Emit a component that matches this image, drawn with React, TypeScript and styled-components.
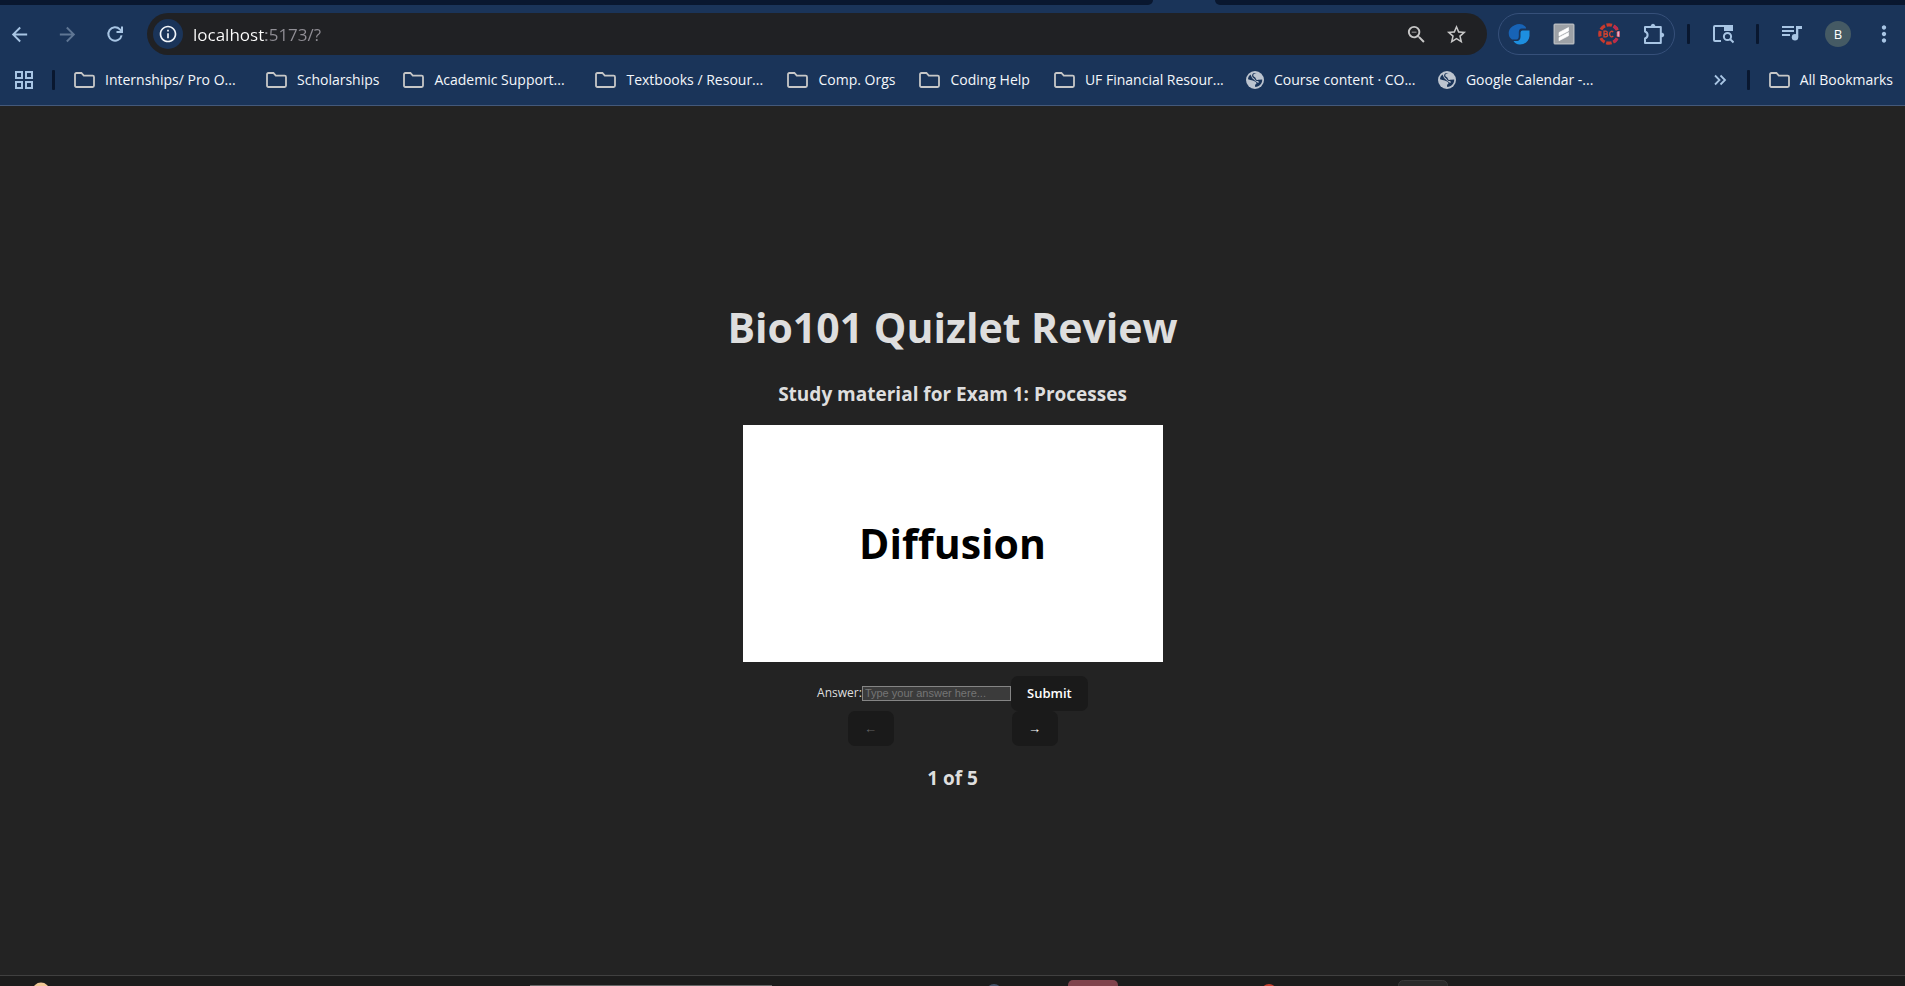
import React, { useState } from "react";
import styled, { createGlobalStyle } from "styled-components";
import {
  MdArrowBack,
  MdArrowForward,
  MdInfoOutline,
  MdMoreVert,
  MdOutlineZoomOut,
  MdStarBorder,
} from "react-icons/md";

const GlobalStyle = createGlobalStyle`
  *, *::before, *::after { box-sizing: border-box; }
  body {
    margin: 0;
    background: #232323;
    font-family: "Open Sans", "Noto Sans", sans-serif;
  }
  button, input { font-family: inherit; }
`;

const Screen = styled.div`
  display: flex;
  flex-direction: column;
  height: 100vh;
  overflow: hidden;
`;

/* ---------- browser chrome ---------- */

const Browser = styled.header`
  background: #1a3459;
  border-bottom: 1px solid #44597a;
`;

const TabStrip = styled.div`
  display: flex;
  gap: 62px;
  height: 5px;
`;

const TabEdge = styled.div<{ $side: "left" | "right" }>`
  flex: ${(p) => (p.$side === "left" ? "1153 1 0" : "690 1 0")};
  background: #09172f;
  border-radius: ${(p) => (p.$side === "left" ? "0 0 8px 0" : "0 0 0 8px")};
`;

const Toolbar = styled.div`
  display: flex;
  align-items: center;
  padding: 8px 10px 0 8px;
`;

const NavGroup = styled.nav`
  display: flex;
  gap: 26px;
  margin-right: 21px;
`;

const IconButton = styled.button<{ $color?: string }>`
  display: flex;
  align-items: center;
  justify-content: center;
  flex: none;
  width: 22px;
  height: 22px;
  padding: 0;
  border: 0;
  background: none;
  color: ${(p) => p.$color || "#a8c5e4"};
  cursor: pointer;
  svg { flex: none; }
`;

const AddressBar = styled.div`
  display: flex;
  align-items: center;
  flex: 1;
  min-width: 0;
  height: 42px;
  margin-right: 11px;
  padding: 0 20px 0 6px;
  gap: 18px;
  border-radius: 21px;
  background: #202124;
`;

const SiteInfo = styled.button`
  display: flex;
  align-items: center;
  justify-content: center;
  flex: none;
  width: 30px;
  height: 30px;
  margin-right: -8px;
  padding: 0;
  border: 0;
  border-radius: 50%;
  background: #1a3459;
  color: #f1f5fa;
`;

const UrlInput = styled.input`
  flex: 1;
  min-width: 0;
  height: 30px;
  padding: 0;
  border: 0;
  outline: 0;
  font-size: 17px;
  line-height: 24px;
  color: transparent;
  background: linear-gradient(90deg, #ffffff 73px, #918f96 73px);
  -webkit-background-clip: text;
  background-clip: text;
`;

const Extensions = styled.div`
  display: flex;
  align-items: center;
  gap: 23px;
  height: 42px;
  padding: 0 9px;
  border: 1px solid #36507a;
  border-radius: 21px;
`;

const Divider = styled.span`
  flex: none;
  width: 3px;
  height: 20px;
  border-radius: 1px;
  background: #09172f;
`;

const ToolActions = styled.div`
  display: flex;
  align-items: center;
  gap: 22px;
  margin-left: 12px;
`;

const Avatar = styled.button`
  flex: none;
  width: 26px;
  height: 26px;
  padding: 0;
  border: 0;
  border-radius: 50%;
  background: #455a64;
  color: #ffffff;
  font-size: 13px;
  line-height: 26px;
`;

const Bookmarks = styled.nav`
  display: flex;
  align-items: center;
  height: 50px;
  padding: 0 12px 0 13px;
`;

const AppsGroup = styled.div`
  display: flex;
  align-items: center;
  gap: 17px;
`;

const BookmarkList = styled.div`
  display: flex;
  flex: 1;
  min-width: 0;
  overflow: hidden;
  margin-left: 19px;
`;

const Bookmark = styled.a<{ $long?: boolean }>`
  display: flex;
  align-items: center;
  flex: none;
  gap: 10px;
  width: ${(p) => (p.$long ? "192px" : "auto")};
  padding-right: 24px;
  color: #f4f7fb;
  font-size: 14px;
  line-height: 20px;
  text-decoration: none;
  white-space: nowrap;
  svg { flex: none; color: #c7c7c7; }
`;

const AllBookmarks = styled.div`
  display: flex;
  align-items: center;
  gap: 19px;
  margin-left: 16px;
  a { padding-right: 0; }
`;

/* ---------- quiz page ---------- */

const Main = styled.main`
  display: flex;
  flex: 1;
  flex-direction: column;
  align-items: center;
  justify-content: center;
  min-height: 0;
  padding-top: 9px;
  color: #dedede;
  text-align: center;
`;

const Title = styled.h1`
  margin: 0 0 27px;
  font-size: 41px;
  line-height: 54px;
`;

const Caption = styled.h2`
  margin: 0;
  font-size: 19px;
  line-height: 26px;
`;

const Card = styled.section`
  display: flex;
  align-items: center;
  justify-content: center;
  width: 420px;
  height: 237px;
  margin: 18px 0 14px;
  background: #ffffff;
  color: #000000;
`;

const Term = styled.p`
  margin: 0;
  font-size: 41px;
  font-weight: 700;
  line-height: 54px;
`;

const AnswerForm = styled.form`
  display: flex;
  align-items: center;
`;

const AnswerLabel = styled.label`
  font-size: 12px;
  line-height: 18px;
`;

const AnswerInput = styled.input`
  width: 149px;
  height: 15px;
  padding: 0 2px;
  border: 1px solid #858585;
  background: #3b3b3b;
  color: #ffffff;
  font-family: "Liberation Sans", Arial, sans-serif;
  font-size: 11px;
  line-height: 13px;
  &::placeholder { color: #757575; }
`;

const Button = styled.button<{ $wide?: boolean }>`
  width: ${(p) => (p.$wide ? "77px" : "46px")};
  height: 35px;
  padding: 0;
  border: 0;
  border-radius: 7px;
  background: #1a1a1a;
  color: #ffffff;
  font-size: 13px;
  font-weight: 600;
  cursor: pointer;
  &:disabled { color: #626262; cursor: default; }
`;

const Pager = styled.div`
  display: flex;
  gap: 118px;
  margin-bottom: 19px;
`;

/* ---------- system taskbar ---------- */

const Taskbar = styled.footer`
  flex: none;
  height: 11px;
  border-top: 1px solid #404040;
  background: #1c1c1c;
  svg { display: block; width: 100%; height: 10px; }
`;

/* ---------- icons ---------- */

const ReloadIcon = () => (
  <svg width="18" height="18" viewBox="0 0 18 18" fill="none" stroke="currentColor" strokeWidth="2">
    <path d="M15.6 10.4A6.7 6.7 0 1 1 13.9 4.4L16 6.6" />
    <path d="M16 1.5V7H10.5" />
  </svg>
);

const FolderIcon = () => (
  <svg width="21" height="16" viewBox="0 0 21 16" fill="none" stroke="currentColor" strokeWidth="1.8">
    <path d="M1 2.4Q1 1 2.4 1H7.4L9.8 3.6H18.6Q20 3.6 20 5V13.6Q20 15 18.6 15H2.4Q1 15 1 13.6Z" />
  </svg>
);

const GlobeIcon = () => (
  <svg width="18" height="18" viewBox="0 0 18 18">
    <circle cx="9" cy="9" r="9" fill="#bcc4cf" />
    <path
      d="M11 2.3C8.500 2 7 3.200 7.300 4.800C7.600 6.200 9.500 5.800 9.700 7.200C9.900 8.800 11 9.200 12.600 8.800L16.200 8.500C16.400 12.200 13.700 15.800 9.200 16.100L9 13.800C10.500 13.200 11 12 9.800 11C8.500 10 5.500 9 2 8.200C2 6.500 3 4.500 4.500 3.500L6 6.800C7 8.300 8 8.600 9 9.800L12.200 12C13.500 10.500 12.500 9.900 10.800 9.900C8.900 9.500 8.800 7.500 7.600 6.900C5.400 5.800 5.600 2.400 8.500 1.900Z"
      fill="#1a3459"
    />
  </svg>
);

const AppsIcon = () => (
  <svg width="20" height="20" viewBox="0 0 20 20" fill="none" stroke="currentColor" strokeWidth="2">
    <path d="M2 2h6v6h-6zM12 2h6v6h-6zM2 12h6v6h-6zM12 12h6v6h-6z" />
  </svg>
);

const SwirlIcon = () => (
  <svg width="22" height="22" viewBox="0 0 22 22">
    <path d="M6.5 2.2Q12.500 -.8 17 3.200Q18.300 4.300 18 5.600H13.500Q11 6 10.800 9V13Q10.800 16.400 8.500 16.400H4Q.2 14 .8 8.800Q1.500 4.300 6.500 2.200Z" fill="#1763b6" />
    <path d="M14.500 7.600H21.500V13C21 18.500 16.500 21.700 11.500 21.500Q7.500 21.200 5.500 17.900H9.500Q12.500 17.500 12.500 13.500V9.600Q12.700 7.600 14.500 7.600Z" fill="#1d8fe0" />
  </svg>
);

const StripeIcon = () => (
  <svg width="22" height="22" viewBox="0 0 22 22">
    <rect x="0.500" y="0.500" width="21" height="21" rx="1.500" fill="#b3b7bc" />
    <rect x="2" y="2" width="18" height="18" fill="#9da1a6" />
    <path d="M6 9.500L15.500 4.500V8L6 13ZM6 14.500L15.500 9.500V12.800L6 17.800Z" fill="#fff" stroke="#fff" strokeWidth=".6" strokeLinejoin="round" />
  </svg>
);

const BadgeIcon = () => (
  <svg width="22" height="22" viewBox="0 0 22 22">
    <circle cx="11" cy="11" r="9.200" fill="none" stroke="#c93a2d" strokeWidth="3.200" strokeDasharray="5.600 1.626" strokeDashoffset="2.800" />
    <path d="M16.200 3.400l2.600 2.600M16.200 18.600l2.600-2.600" stroke="#b82958" strokeWidth="3" />
    <path d="M6 8.200V13.800H8Q9.600 13.700 9.600 12.300Q9.600 11.100 8.300 11Q9.300 10.700 9.300 9.600Q9.200 8.200 7.800 8.200ZM6 11H8.300M15.200 9Q14.300 8.100 13.200 8.300Q11.600 8.800 11.600 11T13.200 13.800Q14.400 14 15.200 13" fill="none" stroke="#d4442f" strokeWidth="1.300" />
    <path d="M19 8.500h3v5h-3z" fill="#b82958" />
    <path d="M21.500 9h-1.500v4h1.500M20 11h1.500" fill="none" stroke="#f1dce5" strokeWidth="1.100" />
  </svg>
);

const PuzzleIcon = () => (
  <svg width="22" height="22" viewBox="0 0 22 22" fill="none" stroke="currentColor" strokeWidth="2" strokeLinejoin="round">
    <path d="M2 4H17.800V20H2V15.500Q4.600 14.400 4.600 12T2 8.500Z" />
    <path d="M8 3.600Q8.200 1.200 10 1.200T12 3.600ZM18.500 10Q20.800 10.200 20.800 12T18.500 14Z" fill="currentColor" strokeWidth="1" />
  </svg>
);

const SidePanelSearchIcon = () => (
  <svg width="22" height="20" viewBox="0 0 22 20" fill="none" stroke="currentColor" strokeWidth="2">
    <path d="M9 17H3Q2 17 2 16V3Q2 2 3 2H20V7" />
    <path d="M12 1H19.500Q21 1 21 2.500V7H12Z" fill="currentColor" stroke="none" />
    <circle cx="15.500" cy="12.500" r="3.600" />
    <path d="M18 15L21.500 18.500" />
  </svg>
);

const QueueIcon = () => (
  <svg width="22" height="18" viewBox="0 0 22 18">
    <path d="M1 2h12M1 6h12M1 10h8" stroke="currentColor" strokeWidth="2" />
    <path d="M15 1h6v3h-3.700v8.300h-2.300z" fill="currentColor" />
    <circle cx="14" cy="12.300" r="3.200" fill="currentColor" />
  </svg>
);

const OverflowIcon = () => (
  <svg width="14" height="12" viewBox="0 0 14 12" fill="none" stroke="currentColor" strokeWidth="1.8">
    <path d="M2 1.500L6.500 6L2 10.500M7.500 1.500L12 6L7.500 10.500" />
  </svg>
);

type BookmarkEntry = { name: string; long?: boolean; site?: boolean };

const bookmarks: BookmarkEntry[] = [
  { name: "Internships/ Pro O...", long: true },
  { name: "Scholarships" },
  { name: "Academic Support...", long: true },
  { name: "Textbooks / Resour...", long: true },
  { name: "Comp. Orgs" },
  { name: "Coding Help" },
  { name: "UF Financial Resour...", long: true },
  { name: "Course content · CO...", long: true, site: true },
  { name: "Google Calendar -...", long: true, site: true },
];

const terms = ["Diffusion", "Osmosis", "Mitosis", "Meiosis", "Photosynthesis"];

export default function App() {
  const [index, setIndex] = useState(0);
  const [answer, setAnswer] = useState("");

  return (
    <Screen>
      <GlobalStyle />
      <Browser>
        <TabStrip>
          <TabEdge $side="left" />
          <TabEdge $side="right" />
        </TabStrip>
        <Toolbar>
          <NavGroup aria-label="History">
            <IconButton aria-label="Back"><MdArrowBack size={23} /></IconButton>
            <IconButton aria-label="Forward" $color="#5f7694"><MdArrowForward size={23} /></IconButton>
            <IconButton aria-label="Reload"><ReloadIcon /></IconButton>
          </NavGroup>
          <AddressBar>
            <SiteInfo aria-label="Site information"><MdInfoOutline size={20} /></SiteInfo>
            <UrlInput aria-label="Address" defaultValue="localhost:5173/?" />
            <IconButton aria-label="Zoom" $color="#c7c7c7"><MdOutlineZoomOut size={23} /></IconButton>
            <IconButton aria-label="Bookmark this page" $color="#c7c7c7"><MdStarBorder size={23} /></IconButton>
          </AddressBar>
          <Extensions>
            <IconButton aria-label="Swirl extension"><SwirlIcon /></IconButton>
            <IconButton aria-label="Stripe extension"><StripeIcon /></IconButton>
            <IconButton aria-label="Badge extension"><BadgeIcon /></IconButton>
            <IconButton aria-label="Extensions"><PuzzleIcon /></IconButton>
          </Extensions>
          <ToolActions>
            <Divider />
            <IconButton aria-label="Side search"><SidePanelSearchIcon /></IconButton>
            <Divider />
            <IconButton aria-label="Media"><QueueIcon /></IconButton>
            <Avatar aria-label="Profile">B</Avatar>
            <IconButton aria-label="Menu"><MdMoreVert size={26} /></IconButton>
          </ToolActions>
        </Toolbar>
        <Bookmarks aria-label="Bookmarks">
          <AppsGroup>
            <IconButton aria-label="Apps"><AppsIcon /></IconButton>
            <Divider />
          </AppsGroup>
          <BookmarkList>
            {bookmarks.map((b) => (
              <Bookmark key={b.name} href="#" $long={b.long}>
                {b.site ? <GlobeIcon /> : <FolderIcon />}
                {b.name}
              </Bookmark>
            ))}
          </BookmarkList>
          <IconButton aria-label="More bookmarks"><OverflowIcon /></IconButton>
          <AllBookmarks>
            <Divider />
            <Bookmark href="#"><FolderIcon />All Bookmarks</Bookmark>
          </AllBookmarks>
        </Bookmarks>
      </Browser>

      <Main>
        <Title>Bio101 Quizlet Review</Title>
        <Caption>Study material for Exam 1: Processes</Caption>
        <Card><Term>{terms[index]}</Term></Card>
        <AnswerForm onSubmit={(e) => e.preventDefault()}>
          <AnswerLabel htmlFor="answer">Answer:</AnswerLabel>
          <AnswerInput
            id="answer"
            value={answer}
            placeholder="Type your answer here..."
            onChange={(e) => setAnswer(e.target.value)}
          />
          <Button $wide type="submit">Submit</Button>
        </AnswerForm>
        <Pager>
          <Button aria-label="Previous" disabled={index === 0} onClick={() => setIndex(index - 1)}>←</Button>
          <Button aria-label="Next" disabled={index === terms.length - 1} onClick={() => setIndex(index + 1)}>→</Button>
        </Pager>
        <Caption as="p"><b>{index + 1} of {terms.length}</b></Caption>
      </Main>

      <Taskbar>
        <svg viewBox="0 0 1905 10" preserveAspectRatio="xMidYMin slice" aria-hidden="true">
          <circle cx="41" cy="15" r="8.5" fill="#f2c896" />
          <path d="M530 9.500H772" stroke="#666" />
          <circle cx="994" cy="16" r="8" fill="#44536a" />
          <rect x="1068" y="4" width="50" height="20" rx="5" fill="#80434c" />
          <circle cx="1269" cy="16" r="8" fill="#c8402f" />
          <rect x="1398.500" y="4.500" width="49" height="20" rx="5" fill="#2a2a2a" stroke="#383838" />
        </svg>
      </Taskbar>
    </Screen>
  );
}
